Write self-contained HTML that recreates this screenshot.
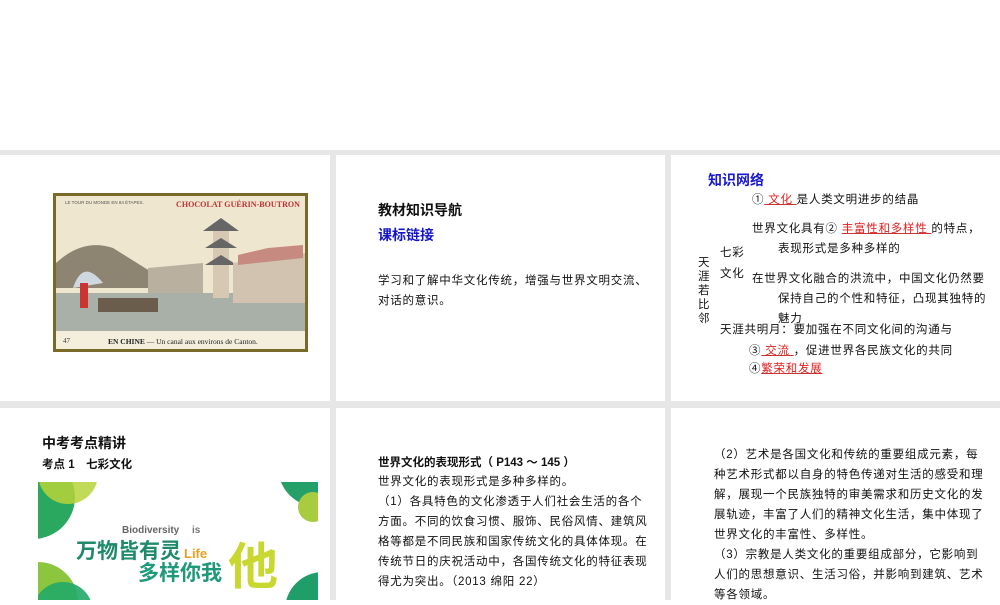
<!DOCTYPE html>
<html><head><meta charset="utf-8"><style>
*{margin:0;padding:0;box-sizing:border-box}
body{width:1000px;height:600px;background:#fff;position:relative;overflow:hidden;font-family:"Liberation Sans","Noto Sans CJK SC",sans-serif;color:#111}
.g{position:absolute;background:#e7e7e7}
.a{position:absolute;white-space:nowrap}
.t{font-size:11.5px;line-height:18px;letter-spacing:0.75px}
.b{font-weight:bold}
.r{color:#e02020;text-decoration:underline;text-decoration-color:#c33}
</style></head><body>
<div class="g" style="left:0;top:150px;width:1000px;height:5px"></div>
<div class="g" style="left:0;top:401px;width:1000px;height:7px"></div>
<div class="g" style="left:330px;top:150px;width:6px;height:450px"></div>
<div class="g" style="left:665px;top:150px;width:6px;height:450px"></div>

<!-- postcard -->
<svg class="a" style="left:53px;top:193px" width="255" height="159" viewBox="0 0 255 159">
<rect width="255" height="159" fill="#7a6a2a"/>
<rect x="3" y="3" width="249" height="135" fill="#efe6cf"/>
<rect x="3" y="100" width="249" height="38" fill="#a9b0a8"/>
<path d="M3 70 Q30 45 60 55 L100 80 L100 95 L3 95Z" fill="#8d8472"/>
<path d="M20 95 Q30 65 50 90Z" fill="#cfd8df"/>
<rect x="160" y="30" width="16" height="75" fill="#d6c8b2"/>
<path d="M150 38 L186 38 L168 25Z M152 55 L184 55 L168 45Z M152 72 L184 72 L168 62Z" fill="#666"/>
<path d="M180 70 L252 60 L252 110 L180 110Z" fill="#d2c2b0"/>
<path d="M185 62 L215 55 L250 52 L250 65 L185 72Z" fill="#c68a80"/>
<path d="M95 75 L150 70 L150 100 L95 100Z" fill="#b9b0a0"/>
<rect x="45" y="105" width="60" height="14" fill="#6a5d4c"/>
<rect x="27" y="90" width="8" height="25" fill="#c33"/>
<rect x="3" y="138" width="249" height="18" fill="#f3efdc"/>
<text x="12" y="11" font-size="4.5" fill="#555" font-family="Liberation Sans">LE TOUR DU MONDE EN 84 ÉTAPES.</text>
<text x="123" y="14" font-size="8" fill="#b33" font-weight="bold" font-family="Liberation Serif" textLength="124" lengthAdjust="spacingAndGlyphs">CHOCOLAT GUÉRIN-BOUTRON</text>
<text x="10" y="150" font-size="7" fill="#333" font-family="Liberation Serif">47</text>
<text x="55" y="151" font-size="7.5" fill="#222" font-family="Liberation Serif"><tspan font-weight="bold">EN CHINE</tspan> — Un canal aux environs de Canton.</text>
</svg>

<div class="a b" style="left:378px;top:200px;font-size:14px">教材知识导航</div>
<div class="a b" style="left:378px;top:225px;font-size:14px;color:#1515c8">课标链接</div>
<div class="a t" style="left:378px;top:271px;line-height:20px">学习和了解中华文化传统，增强与世界文明交流、<br>对话的意识。</div>

<div class="a b" style="left:708px;top:170px;font-size:14px;color:#1a1ad0">知识网络</div>
<div class="a t" style="left:752px;top:191px">①<span class="r"> 文化 </span> 是人类文明进步的结晶</div>
<div class="a t" style="left:752px;top:220px">世界文化具有② <span class="r">丰富性和多样性 </span> 的特点，</div>
<div class="a t" style="left:778px;top:240px">表现形式是多种多样的</div>
<div class="a t" style="left:720px;top:243px;line-height:21px">七彩<br>文化</div>
<div class="a t" style="left:698px;top:256px;line-height:14px;white-space:normal;width:12px">天涯若比邻</div>
<div class="a t" style="left:752px;top:270px">在世界文化融合的洪流中，中国文化仍然要</div>
<div class="a t" style="left:778px;top:290px">保持自己的个性和特征，凸现其独特的</div>
<div class="a t" style="left:778px;top:310px">魅力</div>
<div class="a t" style="left:720px;top:321px">天涯共明月：要加强在不同文化间的沟通与</div>
<div class="a t" style="left:749px;top:342px">③<span class="r"> 交流 </span>，促进世界各民族文化的共同</div>
<div class="a t" style="left:749px;top:360px">④<span class="r">繁荣和发展</span></div>

<div class="a b" style="left:42px;top:433px;font-size:14px">中考考点精讲</div>
<div class="a b" style="left:42px;top:456px;font-size:11.5px">考点 1　七彩文化</div>
<svg class="a" style="left:38px;top:482px" width="280" height="118" viewBox="0 0 280 118">
<rect width="280" height="118" fill="#fff"/>
<circle cx="-5" cy="15" r="42" fill="#2aa860"/>
<circle cx="30" cy="-8" r="30" fill="#b6d43a" opacity=".85"/>
<circle cx="280" cy="-15" r="40" fill="#25a068"/>
<circle cx="275" cy="25" r="15" fill="#a8cc40"/>
<circle cx="0" cy="120" r="40" fill="#8cc63f"/>
<circle cx="25" cy="130" r="30" fill="#22a868" opacity=".9"/>
<circle cx="285" cy="128" r="38" fill="#1f9e6a"/>
<text x="84" y="51" font-size="10" font-weight="bold" fill="#666" font-family="Liberation Sans">Biodiversity</text>
<text x="154" y="51" font-size="10" font-weight="bold" fill="#777" font-family="Liberation Sans">is</text>
<text x="38" y="76" font-size="21" font-weight="bold" fill="#1e8a6a" font-family="Noto Sans CJK SC">万物皆有灵</text>
<text x="146" y="76" font-size="13" font-weight="bold" fill="#e8a020" font-family="Liberation Sans">Life</text>
<text x="100" y="98" font-size="21" font-weight="bold" fill="#1e9a7a" font-family="Noto Sans CJK SC">多样你我</text>
<text x="190" y="102" font-size="50" font-weight="bold" fill="#c8d830" font-family="Noto Sans CJK SC">他</text>
</svg>

<div class="a b" style="left:378px;top:454px;font-size:11.5px">世界文化的表现形式（ P143 ～ 145 ）</div>
<div class="a t" style="left:378px;top:472px;line-height:20px">世界文化的表现形式是多种多样的。<br>（1）各具特色的文化渗透于人们社会生活的各个<br>方面。不同的饮食习惯、服饰、民俗风情、建筑风<br>格等都是不同民族和国家传统文化的具体体现。在<br>传统节日的庆祝活动中，各国传统文化的特征表现<br>得尤为突出。（2013 绵阳 22）</div>

<div class="a t" style="left:714px;top:445px;line-height:20px">（2）艺术是各国文化和传统的重要组成元素，每<br>种艺术形式都以自身的特色传递对生活的感受和理<br>解，展现一个民族独特的审美需求和历史文化的发<br>展轨迹，丰富了人们的精神文化生活，集中体现了<br>世界文化的丰富性、多样性。<br>（3）宗教是人类文化的重要组成部分，它影响到<br>人们的思想意识、生活习俗，并影响到建筑、艺术<br>等各领域。</div>
</body></html>
